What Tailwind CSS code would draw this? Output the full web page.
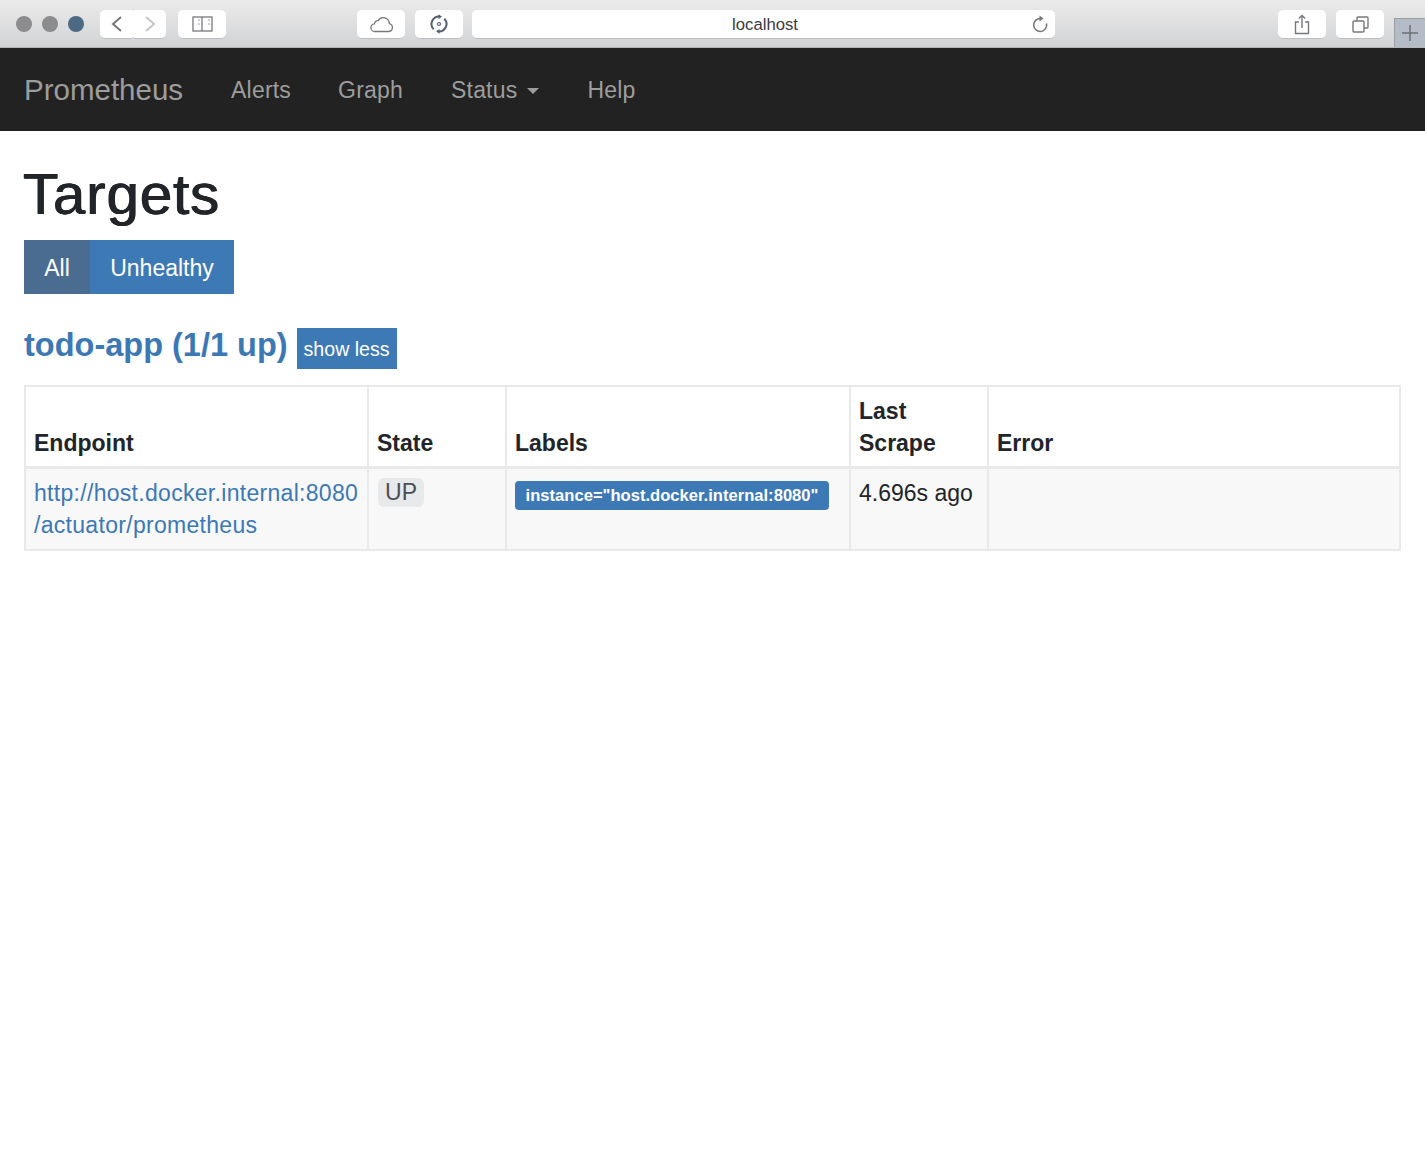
<!DOCTYPE html>
<html lang="en">
<head>
    <meta charset="UTF-8">
    <meta name="viewport" content="width=device-width, initial-scale=1.0">
    <title>Prometheus Time Series Collection and Processing Server</title>
    <script src="https://cdn.jsdelivr.net/npm/@tailwindcss/browser@4"></script>
</head>
<body class="bg-white font-['Liberation_Sans',Arial,sans-serif] text-[23px] leading-[32px] text-[#212529]">
    <!-- browser chrome -->
    <div class="flex h-[48px] items-start bg-gradient-to-b from-[#ebebeb] to-[#d2d3d5] border-b border-[#b4b5b7] pl-[16px]">
        <div class="mt-[16px] h-[16px] w-[16px] rounded-full bg-[#8c8b8d]"></div>
        <div class="ml-[10px] mt-[16px] h-[16px] w-[16px] rounded-full bg-[#8c8b8d]"></div>
        <div class="ml-[10px] mt-[16px] h-[16px] w-[16px] rounded-full bg-[#4d6a85]"></div>

        <button class="ml-[16px] mt-[10px] flex h-[29px] w-[33px] items-center justify-center rounded-l-[5px] rounded-r-[2px] bg-white border-b border-[#bcbdc0]">
            <svg width="14" height="18" viewBox="0 0 14 18" fill="none" stroke="#77787b" stroke-width="2"><path d="M11 2 3 9l8 7"/></svg>
        </button>
        <button class="mt-[10px] flex h-[29px] w-[33px] items-center justify-center rounded-r-[5px] rounded-l-[2px] bg-white border-b border-[#bcbdc0]">
            <svg width="14" height="18" viewBox="0 0 14 18" fill="none" stroke="#c4c5c7" stroke-width="2"><path d="m3 2 8 7-8 7"/></svg>
        </button>
        <button class="ml-[12px] mt-[10px] flex h-[29px] w-[48px] items-center justify-center rounded-[5px] bg-white border-b border-[#bcbdc0]">
            <svg width="21" height="16" viewBox="0 0 21 16" fill="none" stroke="#77787b" stroke-width="1.3"><rect x="1" y="1" width="19" height="14"/><path d="M10 1v14"/><path d="M7 3v2M7 7v2M17 3v2M17 7v2" stroke="#b5b6b8"/></svg>
        </button>

        <button class="ml-[131px] mt-[10px] flex h-[29px] w-[48px] items-center justify-center rounded-[5px] bg-white border-b border-[#bcbdc0]">
            <svg width="25" height="17" viewBox="0 0 25 17" fill="none" stroke="#77787b" stroke-width="1.3"><path d="M6 15.5h13.5a4 4 0 0 0 .8-7.9A6 6 0 0 0 9.2 4.6 3.8 3.8 0 0 0 5.4 7.9 3.8 3.8 0 0 0 6 15.5Z"/></svg>
        </button>
        <button class="ml-[10px] mt-[10px] flex h-[29px] w-[48px] items-center justify-center rounded-[5px] bg-white border-b border-[#bcbdc0]">
            <svg width="20" height="20" viewBox="0 0 20 20" fill="none" stroke="#55606c" stroke-width="2"><path d="M11 2.600A7.500 7.500 0 0 0 4.700 15.300"/><path d="M9 17.400A7.500 7.500 0 0 0 15.300 4.700"/><path d="M9.500 0.300 13 2.800 9.500 5zM10.500 19.700 7 17.200 10.500 15z" fill="#55606c" stroke="none"/><circle cx="10" cy="10" r="1.500" stroke-width="1.200"/></svg>
        </button>
        <div class="relative ml-[9px] mt-[10px] flex h-[29px] w-[583px] items-center justify-center rounded-[5px] bg-white border-b border-[#bcbdc0] pl-[3px] pt-[1px] text-[16.7px] leading-[28px] text-[#3a3a3c]">
            localhost
            <svg class="absolute right-[5px] top-[4px]" width="20" height="20" viewBox="0 0 20 20" fill="none" stroke="#77787b" stroke-width="1.6"><path d="M10.5 4.5a6.5 6.5 0 1 0 6 5"/><path d="m9.5 1.5 4 3-4 3" fill="#77787b" stroke="none"/></svg>
        </div>

        <button class="ml-[223px] mt-[10px] flex h-[29px] w-[48px] items-center justify-center rounded-[5px] bg-white border-b border-[#bcbdc0]">
            <svg width="16" height="21" viewBox="0 0 16 21" fill="none" stroke="#77787b" stroke-width="1.4"><path d="M5 8H1.5v11.500h13V8H11"/><path d="M8 14V1.500M4.800 4.500 8 1.500l3.200 3"/></svg>
        </button>
        <button class="ml-[10px] mt-[10px] flex h-[29px] w-[48px] items-center justify-center rounded-[5px] bg-white border-b border-[#bcbdc0]">
            <svg width="17" height="17" viewBox="0 0 17 17" fill="none" stroke="#77787b" stroke-width="1.4"><rect x="1" y="5" width="11" height="11" rx="1"/><path d="M5 5V2a1 1 0 0 1 1-1h9a1 1 0 0 1 1 1v9a1 1 0 0 1-1 1h-3"/></svg>
        </button>
        <div class="ml-[10px] mt-[18px] flex h-[29px] flex-1 items-center justify-center border-l border-t border-[#9b9ea3] bg-[#b4bcc8]">
            <svg width="16" height="16" viewBox="0 0 16 16" stroke="#6c7076" stroke-width="1.5"><path d="M8 0v16M0 8h16"/></svg>
        </div>
    </div>

    <!-- navbar -->
    <nav class="flex h-[83px] items-center bg-[#222222] pl-[24px] text-[#9d9d9d] tracking-[0.2px]">
        <a href="#" class="text-[29.5px] tracking-normal">Prometheus</a>
        <a href="#" class="ml-[48px]">Alerts</a>
        <a href="#" class="ml-[47px]">Graph</a>
        <a href="#" class="ml-[48px] flex items-center">Status<span class="ml-[10px] mt-[3px] h-0 w-0 border-x-[6px] border-t-[6px] border-x-transparent border-t-[#9d9d9d]"></span></a>
        <a href="#" class="ml-[48px]">Help</a>
    </nav>

    <main class="px-[24px]">
        <h1 class="ml-[-1px] mt-[28px] text-[58px] leading-[69px] font-normal tracking-[1px] [text-shadow:0.6px_0_0_#212529,-0.6px_0_0_#212529]">Targets</h1>

        <div class="mt-[12px] flex w-fit text-white">
            <button class="h-[54px] w-[66px] bg-[#4a6c90] pt-[1px]">All</button>
            <button class="h-[54px] w-[144px] bg-[#3d79b5] pt-[1px]">Unhealthy</button>
        </div>

        <div class="mt-[33px] flex items-start">
            <a href="#" class="text-[32.5px] leading-[36px] font-bold text-[#3c78b4]">todo-app (1/1 up)</a>
            <button class="ml-[9px] mt-[1px] h-[41px] w-[100px] bg-[#3d79b5] text-[19.6px] text-white">show less</button>
        </div>

        <table class="mt-[16px] w-[1375px] table-fixed border-collapse">
            <colgroup>
                <col class="w-[343px]">
                <col class="w-[138px]">
                <col class="w-[344px]">
                <col class="w-[138px]">
                <col class="w-[412px]">
            </colgroup>
            <thead>
                <tr class="font-bold">
                    <th class="border-2 border-b-[3px] border-[#e9e9e9] px-[8px] pt-[8px] pb-[7px] text-left align-bottom">Endpoint</th>
                    <th class="border-2 border-b-[3px] border-[#e9e9e9] px-[8px] pt-[8px] pb-[7px] text-left align-bottom">State</th>
                    <th class="border-2 border-b-[3px] border-[#e9e9e9] px-[8px] pt-[8px] pb-[7px] text-left align-bottom">Labels</th>
                    <th class="border-2 border-b-[3px] border-[#e9e9e9] px-[8px] pt-[8px] pb-[7px] text-left align-bottom">Last<br>Scrape</th>
                    <th class="border-2 border-b-[3px] border-[#e9e9e9] px-[8px] pt-[8px] pb-[7px] text-left align-bottom">Error</th>
                </tr>
            </thead>
            <tbody>
                <tr class="bg-[#f8f8f8]">
                    <td class="border-2 border-[#e9e9e9] px-[8px] pt-[8px] pb-[8px] align-top tracking-[0.3px] text-[#3c78b4]"><a href="#">http://host.docker.internal:8080<br>/actuator/prometheus</a></td>
                    <td class="border-2 border-[#e9e9e9] px-[8px] pt-[9px] pb-[8px] align-top"><span class="ml-[1px] block h-[29px] w-[46px] rounded-[6px] bg-[#e8e9ea] text-center leading-[29px] text-[#4a4f55]">UP</span></td>
                    <td class="border-2 border-[#e9e9e9] px-[8px] pt-[12px] pb-[8px] align-top"><span class="block h-[29px] w-[314px] rounded-[4px] bg-[#3d79b5] text-center text-[16.6px] leading-[29px] font-bold whitespace-nowrap text-white">instance="host.docker.internal:8080"</span></td>
                    <td class="border-2 border-[#e9e9e9] px-[8px] pt-[8px] pb-[8px] align-top">4.696s ago</td>
                    <td class="border-2 border-[#e9e9e9] px-[8px] pt-[8px] pb-[8px] align-top"></td>
                </tr>
            </tbody>
        </table>
    </main>
</body>
</html>
